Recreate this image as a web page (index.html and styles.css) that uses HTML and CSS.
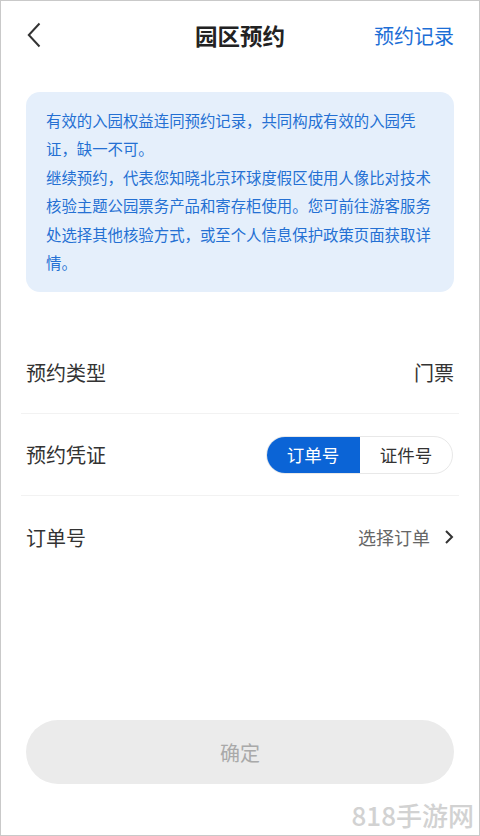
FILE: index.html
```html
<!DOCTYPE html>
<html lang="zh-CN">
<head>
  <meta charset="UTF-8">
  <title>园区预约</title>
  <link rel="stylesheet" href="styles.css">
</head>
<body>
  <div class="page">
    <!-- Header -->
    <div class="header">
      <span class="back">
        <svg width="14" height="26" viewBox="0 0 14 26">
          <path d="M12.5 1.5 L1.8 13 L12.5 24.5" fill="none" stroke="#333" stroke-width="2"/>
        </svg>
      </span>
      <h1>园区预约</h1>
      <a class="records">预约记录</a>
    </div>

    <!-- Notice -->
    <div class="notice">
      <p>有效的入园权益连同预约记录，共同构成有效的入园凭证，缺一不可。</p>
      <p>继续预约，代表您知晓北京环球度假区使用人像比对技术核验主题公园票务产品和寄存柜使用。您可前往游客服务处选择其他核验方式，或至个人信息保护政策页面获取详情。</p>
    </div>

    <!-- Form rows -->
    <div class="form">
      <div class="row">
        <span class="label">预约类型</span>
        <span class="value">门票</span>
      </div>
      <div class="row">
        <span class="label">预约凭证</span>
        <div class="segment">
          <span class="seg-item active">订单号</span>
          <span class="seg-item">证件号</span>
        </div>
      </div>
      <div class="row">
        <span class="label">订单号</span>
        <span class="pick">
          选择订单
          <svg width="10" height="16" viewBox="0 0 10 16">
            <path d="M2 2 L8 8 L2 14" fill="none" stroke="#333" stroke-width="2"/>
          </svg>
        </span>
      </div>
    </div>

    <div class="spacer"></div>

    <button class="confirm" disabled>确定</button>

    <div class="watermark">818手游网</div>
  </div>
</body>
</html>
```

FILE: styles.css
```css
body, h1, p {
  margin: 0;
  padding: 0;
}

*, *::before, *::after {
  box-sizing: border-box;
}

body {
  font-family: "Noto Sans CJK SC", "Noto Sans", sans-serif;
  background-color: #fff;
  color: #333;
}

.page {
  position: relative;
  width: 480px;
  height: 836px;
  border: 1px solid #c9c9c9;
  display: flex;
  flex-direction: column;
  padding: 0 25px;
}

/* Header */
.header {
  display: flex;
  align-items: center;
  justify-content: space-between;
  height: 68px;
}

.back {
  display: flex;
  width: 80px;
  padding-left: 1px;
}

.header h1 {
  font-size: 22.5px;
  font-weight: bold;
  color: #222;
}

.records {
  width: 80px;
  font-size: 20px;
  color: #1c6ed6;
  text-align: right;
  white-space: nowrap;
}

/* Notice card */
.notice {
  margin-top: 23px;
  background-color: #e5effb;
  border-radius: 14px;
  padding: 14px 20px 16px;
  font-size: 15.4px;
  line-height: 28.4px;
  color: #2470d3;
}

/* Form */
.form {
  margin-top: 40px;
  display: flex;
  flex-direction: column;
}

.row {
  display: flex;
  align-items: center;
  justify-content: space-between;
  height: 82px;
  border-bottom: 1px solid #f2f2f2;
  margin: 0 -5px;
  padding: 0 5px;
}

.row:last-child {
  border-bottom: none;
}

.label {
  font-size: 20px;
  color: #333;
}

.value {
  font-size: 20px;
  color: #333;
}

.segment {
  display: flex;
  height: 38px;
  border: 1px solid #e8e8e8;
  border-radius: 19px;
  overflow: hidden;
  margin-right: 1px;
}

.seg-item {
  width: 92px;
  display: flex;
  align-items: center;
  justify-content: center;
  font-size: 17.5px;
  color: #333;
}

.seg-item.active {
  background-color: #0b64d6;
  color: #fff;
  margin: -1px 0 -1px -1px;
  width: 94px;
}

.pick {
  display: flex;
  align-items: center;
  gap: 14px;
  font-size: 18px;
  color: #666;
}

.spacer {
  flex: 1;
}

/* Confirm button */
.confirm {
  margin-bottom: 51px;
  height: 64px;
  border: none;
  border-radius: 32px;
  background-color: #ebebeb;
  color: #a9a9a9;
  font-family: inherit;
  font-size: 20px;
}

.watermark {
  position: absolute;
  right: 5px;
  bottom: 2px;
  font-family: "Noto Sans CJK SC", sans-serif;
  font-size: 26px;
  font-weight: 500;
  color: #d2d2d2;
}
```
